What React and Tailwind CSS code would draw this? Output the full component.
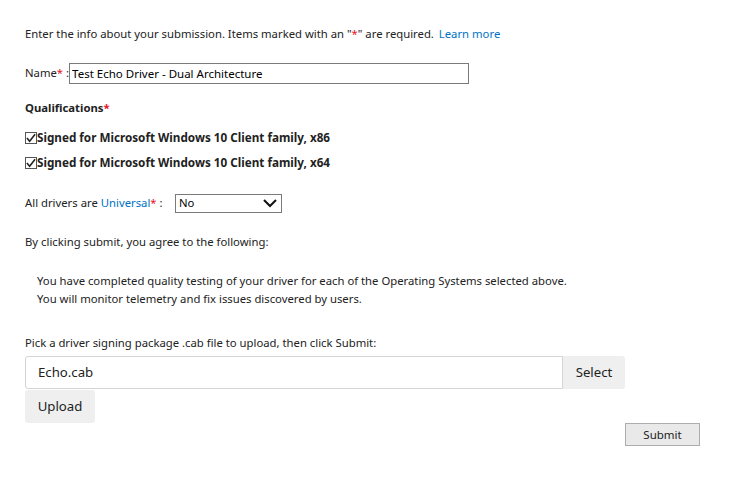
import { useState } from 'react';

const Star = () => <span className="text-[#e81123]">*</span>;

export default function App() {
    const [name, setName] = useState('Test Echo Driver - Dual Architecture');
    const [universal, setUniversal] = useState('No');

    return (
        <div className="w-[733px] h-[486px] bg-white text-[#222] text-[11.3px] font-['Noto_Sans',sans-serif] pl-[25px] pt-[25px]">
            <p className="h-[18px] leading-[18px]">
                Enter the info about your submission. Items marked with an "<Star />" are required.{' '}
                <a className="text-[#0072c6] ml-[2px]">Learn more</a>
            </p>

            {/* name */}
            <div className="flex items-center mt-[20px] h-[21px]">
                <span>Name<Star /> :</span>
                <input
                    value={name}
                    onChange={(e) => setName(e.target.value)}
                    className="w-[400px] h-[21px] border border-[#7a7a7a] px-[2px] text-[11.5px] text-black focus:outline-none"
                />
            </div>

            <p className="mt-[15px] font-bold h-[18px] leading-[18px]">Qualifications<Star /></p>

            <div className="mt-[12px] flex flex-col gap-[7px] font-bold text-[11.7px]">
                {['x86', 'x64'].map((arch) => (
                    <label key={arch} className="flex items-center h-[18px]">
                        <span className="w-[12px] h-[12px] border border-[#555] flex items-center justify-center">
                            <svg width="11" height="10" viewBox="0 0 11 10">
                                <path d="M1 5 L4 8.5 L10 1" stroke="#222" strokeWidth="1.8" fill="none" />
                            </svg>
                        </span>
                        Signed for Microsoft Windows 10 Client family, {arch}
                    </label>
                ))}
            </div>

            {/* universal */}
            <div className="flex items-center mt-[21px] h-[20px]">
                <span className="w-[150px]">All drivers are <a className="text-[#0072c6]">Universal</a><Star /> :</span>
                <div className="relative w-[107px] h-[19px] border border-[#7a7a7a] flex items-center px-[3px]">
                    <span className="text-black">{universal}</span>
                    <svg className="absolute right-[4px] top-[4px]" width="14" height="9" viewBox="0 0 14 9">
                        <path d="M1 1 L7 7 L13 1" stroke="#111" strokeWidth="2" fill="none" />
                    </svg>
                </div>
            </div>

            <p className="mt-[20px] h-[18px] leading-[18px]">By clicking submit, you agree to the following:</p>

            <div className="mt-[21px] ml-[12px] leading-[18px]">
                <p>You have completed quality testing of your driver for each of the Operating Systems selected above.</p>
                <p>You will monitor telemetry and fix issues discovered by users.</p>
            </div>

            <p className="mt-[26px] h-[18px] leading-[18px]">Pick a driver signing package .cab file to upload, then click Submit:</p>

            <div className="mt-[4px] flex w-[600px] h-[33px]">
                <div className="flex-1 border border-[#d4d4d4] rounded-l-[3px] flex items-center px-[12px] text-[13.2px]">Echo.cab</div>
                <button className="w-[62px] bg-[#efefef] rounded-r-[3px] text-[13.2px]">Select</button>
            </div>
            <button className="mt-[1px] w-[70px] h-[33px] bg-[#efefef] rounded-[3px] text-[13.2px]">Upload</button>

            <div className="flex justify-end w-[675px]">
                <button className="w-[75px] h-[23px] border border-[#adadad] bg-[#e9e9e9] text-[11.5px]">Submit</button>
            </div>
        </div>
    );
}
